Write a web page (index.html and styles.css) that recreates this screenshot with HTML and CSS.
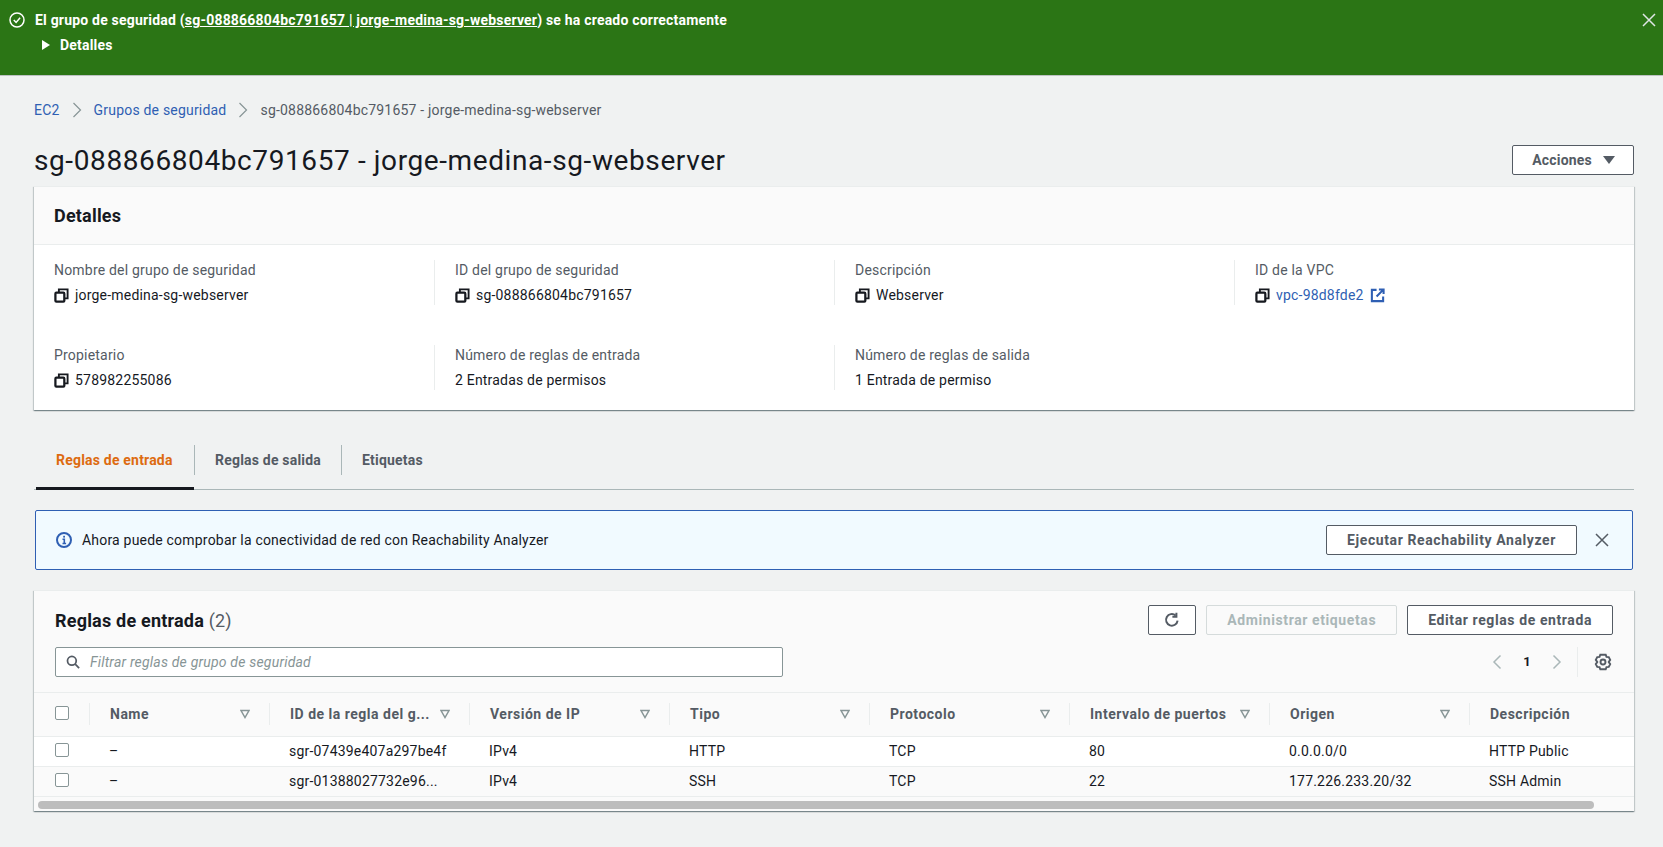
FILE: index.html
```html
<!DOCTYPE html>
<html lang="es">
<head>
  <meta charset="UTF-8">
  <title>Grupo de seguridad</title>
  <link rel="stylesheet" href="styles.css">
</head>
<body>

  <svg class="defs" width="0" height="0">
    <symbol id="copy" viewBox="0 0 16 16">
      <path d="M5.2 5V1.5h9.3V11H11" fill="none" stroke="currentColor" stroke-width="2"/>
      <rect x="1.5" y="5" width="9.5" height="9.5" rx="1" fill="none" stroke="currentColor" stroke-width="2.4"/>
    </symbol>
    <symbol id="sort" viewBox="0 0 10 10">
      <path d="M1 1.5h8L5 8.5z" fill="none" stroke="currentColor" stroke-width="1.5"/>
    </symbol>
    <symbol id="close" viewBox="0 0 16 16">
      <path d="M2 2l12 12M14 2L2 14" fill="none" stroke="currentColor" stroke-width="1.5"/>
    </symbol>
    <symbol id="crumb" viewBox="0 0 10 16">
      <path d="M1.5 1l7 7-7 7" fill="none" stroke="currentColor" stroke-width="1.2"/>
    </symbol>
  </svg>

  <div class="flash-success">
    <div class="flash-body">
      <svg class="flash-icon" viewBox="0 0 16 16"><circle cx="8" cy="8" r="7" fill="none" stroke="currentColor" stroke-width="1.5"/><path d="M4.8 8l2.3 2.4 4-4.6" fill="none" stroke="currentColor" stroke-width="1.5"/></svg>
      <div>
        <div class="flash-title">El grupo de seguridad (<a href="#">sg-088866804bc791657 | jorge-medina-sg-webserver</a>) se ha creado correctamente</div>
        <div class="flash-details"><span class="caret-right"></span>Detalles</div>
      </div>
    </div>
    <svg class="flash-close"><use href="#close"/></svg>
  </div>

  <main class="content">
    <nav class="breadcrumbs">
      <a href="#">EC2</a>
      <svg class="crumb-sep"><use href="#crumb"/></svg>
      <a href="#">Grupos de seguridad</a>
      <svg class="crumb-sep"><use href="#crumb"/></svg>
      <span>sg-088866804bc791657 - jorge-medina-sg-webserver</span>
    </nav>

    <div class="page-header">
      <h1>sg-088866804bc791657 - jorge-medina-sg-webserver</h1>
      <button class="btn btn-actions">Acciones <span class="caret-down"></span></button>
    </div>

    <section class="card details">
      <h2 class="card-title">Detalles</h2>
      <div class="details-grid">
        <div class="field">
          <div class="field-label">Nombre del grupo de seguridad</div>
          <div class="field-value"><svg class="copy"><use href="#copy"/></svg>jorge-medina-sg-webserver</div>
        </div>
        <div class="field">
          <div class="field-label">ID del grupo de seguridad</div>
          <div class="field-value"><svg class="copy"><use href="#copy"/></svg>sg-088866804bc791657</div>
        </div>
        <div class="field">
          <div class="field-label">Descripción</div>
          <div class="field-value"><svg class="copy"><use href="#copy"/></svg>Webserver</div>
        </div>
        <div class="field">
          <div class="field-label">ID de la VPC</div>
          <div class="field-value">
            <svg class="copy"><use href="#copy"/></svg><a href="#">vpc-98d8fde2</a>
            <svg class="external" viewBox="0 0 16 16"><path d="M7 2H2v12h12V9" fill="none" stroke="currentColor" stroke-width="2.2"/><path d="M9.5 1.5h5v5M14 2L7 9" fill="none" stroke="currentColor" stroke-width="2.2"/></svg>
          </div>
        </div>
        <div class="field">
          <div class="field-label">Propietario</div>
          <div class="field-value"><svg class="copy"><use href="#copy"/></svg>578982255086</div>
        </div>
        <div class="field">
          <div class="field-label">Número de reglas de entrada</div>
          <div class="field-value">2 Entradas de permisos</div>
        </div>
        <div class="field">
          <div class="field-label">Número de reglas de salida</div>
          <div class="field-value">1 Entrada de permiso</div>
        </div>
      </div>
    </section>

    <div class="tabs">
      <div class="tab active">Reglas de entrada</div>
      <div class="tab">Reglas de salida</div>
      <div class="tab">Etiquetas</div>
    </div>

    <div class="flash-info">
      <svg class="info-icon" viewBox="0 0 16 16"><circle cx="8" cy="8" r="7" fill="none" stroke="currentColor" stroke-width="2"/><path d="M6.5 7.2H8.3V11.5M6.5 11.5h3.6" fill="none" stroke="currentColor" stroke-width="1.6"/><rect x="7.2" y="3.8" width="1.8" height="1.8" fill="currentColor"/></svg>
      <span class="flash-info-text">Ahora puede comprobar la conectividad de red con Reachability Analyzer</span>
      <button class="btn btn-wide">Ejecutar Reachability Analyzer</button>
      <svg class="info-close"><use href="#close"/></svg>
    </div>

    <section class="card rules">
      <div class="rules-header">
        <div class="rules-left">
          <h2 class="rules-title">Reglas de entrada <span class="count">(2)</span></h2>
          <div class="search">
            <svg class="search-icon" viewBox="0 0 16 16"><circle cx="6.7" cy="6.7" r="5" fill="none" stroke="currentColor" stroke-width="2"/><path d="M10.5 10.5L15 15" fill="none" stroke="currentColor" stroke-width="2"/></svg>
            <span class="placeholder">Filtrar reglas de grupo de seguridad</span>
          </div>
        </div>
        <div class="rules-right">
          <div class="rules-buttons">
            <button class="btn btn-icon"><svg class="refresh" viewBox="0 0 16 16"><path d="M13.6 8.6A5.8 5.8 0 1 1 11.6 3.4" fill="none" stroke="currentColor" stroke-width="2"/><path d="M12.4 0.8v4h-4" fill="none" stroke="currentColor" stroke-width="2"/></svg></button>
            <button class="btn btn-disabled">Administrar etiquetas</button>
            <button class="btn">Editar reglas de entrada</button>
          </div>
          <div class="pager">
            <svg class="pager-arrow" viewBox="0 0 10 16"><path d="M8.5 1.5L2 8l6.5 6.5" fill="none" stroke="currentColor" stroke-width="1.5"/></svg>
            <span class="pager-num">1</span>
            <svg class="pager-arrow" viewBox="0 0 10 16"><path d="M1.5 1.5L8 8l-6.5 6.5" fill="none" stroke="currentColor" stroke-width="1.5"/></svg>
            <span class="pager-div"></span>
            <svg class="gear" viewBox="0 0 16 16"><path d="M5.6 1.5h4.8l.7 1.9 2 .3 1.3 2.4-1.3 1.9 1.3 1.9-1.3 2.4-2 .3-.7 1.9H5.6l-.7-1.9-2-.3-1.3-2.4 1.3-1.9-1.3-1.9 1.3-2.4 2-.3z" fill="none" stroke="currentColor" stroke-width="1.7"/><circle cx="8" cy="8" r="2.2" fill="none" stroke="currentColor" stroke-width="1.7"/></svg>
          </div>
        </div>
      </div>

      <div class="table-wrap">
        <table class="rules-table">
          <colgroup>
            <col class="col-check">
            <col class="col-name">
            <col class="col-data" span="7">
          </colgroup>
          <thead>
            <tr>
              <th class="cell-check"><span class="checkbox"></span></th>
              <th><div class="th-inner"><span>Name</span><svg class="sort"><use href="#sort"/></svg></div></th>
              <th><div class="th-inner"><span>ID de la regla del g...</span><svg class="sort"><use href="#sort"/></svg></div></th>
              <th><div class="th-inner"><span>Versión de IP</span><svg class="sort"><use href="#sort"/></svg></div></th>
              <th><div class="th-inner"><span>Tipo</span><svg class="sort"><use href="#sort"/></svg></div></th>
              <th><div class="th-inner"><span>Protocolo</span><svg class="sort"><use href="#sort"/></svg></div></th>
              <th><div class="th-inner"><span>Intervalo de puertos</span><svg class="sort"><use href="#sort"/></svg></div></th>
              <th><div class="th-inner"><span>Origen</span><svg class="sort"><use href="#sort"/></svg></div></th>
              <th><div class="th-inner"><span>Descripción</span></div></th>
            </tr>
          </thead>
          <tbody>
            <tr class="row-white">
              <td class="cell-check"><span class="checkbox"></span></td>
              <td>–</td>
              <td>sgr-07439e407a297be4f</td>
              <td>IPv4</td>
              <td>HTTP</td>
              <td>TCP</td>
              <td>80</td>
              <td>0.0.0.0/0</td>
              <td>HTTP Public</td>
            </tr>
            <tr>
              <td class="cell-check"><span class="checkbox"></span></td>
              <td>–</td>
              <td>sgr-01388027732e96...</td>
              <td>IPv4</td>
              <td>SSH</td>
              <td>TCP</td>
              <td>22</td>
              <td>177.226.233.20/32</td>
              <td>SSH Admin</td>
            </tr>
          </tbody>
        </table>
      </div>
      <div class="scroll-track"><div class="scroll-thumb"></div></div>
    </section>
  </main>

</body>
</html>
```

FILE: styles.css
```css
* {
  box-sizing: border-box;
}

body {
  margin: 0;
  height: 847px;
  overflow: hidden;
  background-color: #f0f2f2;
  color: #16191f;
  font-family: Roboto, sans-serif;
  font-size: 14px;
  line-height: 20px;
  letter-spacing: 0.2px;
}

a {
  color: #2f5fb3;
  text-decoration: none;
}

.defs {
  position: absolute;
}

/* top banner */
.flash-success {
  display: flex;
  justify-content: space-between;
  height: 76px;
  padding: 10px 6px 0 9px;
  background-color: #2b7515;
  border-bottom: 1px solid #bcc2c2;
  color: #fff;
  font-weight: 700;
}

.flash-body {
  display: flex;
  gap: 10px;
}

.flash-icon {
  width: 16px;
  height: 16px;
  margin-top: 2px;
}

.flash-title a {
  color: #fff;
  text-decoration: underline;
}

.flash-details {
  display: flex;
  align-items: center;
  margin-top: 5px;
  padding-left: 7px;
}

.caret-right {
  width: 0;
  height: 0;
  margin-right: 10px;
  border-left: 8px solid #fff;
  border-top: 5px solid transparent;
  border-bottom: 5px solid transparent;
}

.flash-close {
  width: 16px;
  height: 16px;
  margin-top: 2px;
  color: #dfe5e5;
}

/* main column */
.content {
  padding: 24px 29px 0 34px;
}

.breadcrumbs {
  display: flex;
  align-items: center;
  gap: 12px;
  height: 20px;
  color: #545b64;
}

.crumb-sep {
  width: 10px;
  height: 16px;
  color: #879596;
}

.page-header {
  display: flex;
  justify-content: space-between;
  align-items: center;
  height: 36px;
  margin-top: 22px;
  margin-bottom: 8px;
}

h1 {
  margin: 2px 0 0;
  font-size: 28px;
  font-weight: 400;
  line-height: 36px;
  letter-spacing: 0.6px;
}

.btn {
  height: 30px;
  padding: 0 20px;
  background-color: #fff;
  border: 1px solid #545b64;
  border-radius: 2px;
  color: #545b64;
  font-family: inherit;
  font-size: 14px;
  font-weight: 700;
  line-height: 20px;
  letter-spacing: 0.6px;
}

.btn-actions {
  display: flex;
  align-items: center;
  gap: 11px;
  padding: 0 18px 0 19px;
  letter-spacing: 0.2px;
}

.caret-down {
  width: 0;
  height: 0;
  border-top: 8px solid #545b64;
  border-left: 6px solid transparent;
  border-right: 6px solid transparent;
}

.card {
  background-color: #fff;
  border-top: 1px solid #eaeded;
  box-shadow: 0 1px 1px 0 rgba(0, 28, 36, 0.3), 1px 1px 1px 0 rgba(0, 28, 36, 0.15), -1px 1px 1px 0 rgba(0, 28, 36, 0.15);
}

.details {
  height: 224px;
}

.card-title {
  height: 58px;
  margin: 0;
  padding: 18px 20px;
  background-color: #fafafa;
  border-bottom: 1px solid #eaeded;
  font-size: 18px;
  font-weight: 700;
  line-height: 22px;
}

.details-grid {
  display: grid;
  grid-template-columns: repeat(4, 400px);
  row-gap: 40px;
  padding: 15px 0 0 0;
}

.field {
  height: 45px;
  padding-left: 20px;
  border-left: 1px solid #eaeded;
}

.field:nth-child(4n + 1) {
  border-left: none;
}

.field-label {
  color: #545b64;
}

.field-value {
  display: flex;
  align-items: center;
  margin-top: 5px;
}

.copy {
  width: 15px;
  height: 15px;
  margin-right: 6px;
}

.external {
  width: 15px;
  height: 15px;
  margin-left: 6px;
  color: #2f5fb3;
}

/* tabs */
.tabs {
  display: flex;
  align-items: flex-start;
  height: 80px;
  padding-top: 35px;
  border-bottom: 1px solid #aab7b8;
}

.tab {
  position: relative;
  height: 30px;
  padding: 5px 20px;
  border-left: 1px solid #aab7b8;
  color: #545b64;
  font-weight: 700;
  white-space: nowrap;
}

.tab:first-child {
  border-left: none;
  width: 158px;
  margin-left: 2px;
}

.tab.active {
  color: #dd6b10;
}

.tab.active::after {
  content: "";
  position: absolute;
  left: 0;
  right: 0;
  bottom: -15px;
  height: 3px;
  background-color: #16191f;
}

/* info banner */
.flash-info {
  display: flex;
  align-items: center;
  height: 60px;
  margin: 20px 1px 0;
  padding: 0 22px 0 20px;
  background-color: #f1faff;
  border: 1px solid #2f5fb3;
  border-radius: 2px;
}

.info-icon {
  width: 16px;
  height: 16px;
  margin-right: 10px;
  color: #2f5fb3;
}

.flash-info-text {
  flex: 1;
}

.btn-wide {
  margin-right: 17px;
}

.info-close {
  width: 16px;
  height: 16px;
  color: #545b64;
}

/* rules table */
.rules {
  margin-top: 20px;
  height: 221px;
  background-color: #fafafa;
  overflow: hidden;
}

.rules-header {
  display: flex;
  justify-content: space-between;
  height: 102px;
  padding: 14px 21px 0 21px;
  border-bottom: 1px solid #eaeded;
}

.rules-title {
  height: 30px;
  margin: 0;
  padding-top: 1px;
  font-size: 18px;
  font-weight: 700;
  line-height: 30px;
}

.count {
  color: #545b64;
  font-weight: 400;
}

.search {
  display: flex;
  align-items: center;
  width: 728px;
  height: 30px;
  margin-top: 12px;
  padding-left: 10px;
  background-color: #fff;
  border: 1px solid #879596;
  border-radius: 2px;
}

.search-icon {
  width: 14px;
  height: 14px;
  margin-right: 10px;
  color: #545b64;
}

.placeholder {
  color: #879596;
  font-style: italic;
}

.rules-right {
  display: flex;
  flex-direction: column;
  align-items: flex-end;
}

.rules-buttons {
  display: flex;
  gap: 10px;
}

.btn-icon {
  display: flex;
  align-items: center;
  justify-content: center;
  width: 48px;
  padding: 0;
}

.refresh {
  width: 16px;
  height: 16px;
}

.btn-disabled {
  background-color: #fafafa;
  border-color: #d5dbdb;
  color: #aab7b8;
}

.pager {
  display: flex;
  align-items: center;
  height: 30px;
  margin-top: 12px;
}

.pager-arrow {
  width: 10px;
  height: 16px;
  color: #aab7b8;
}

.pager-num {
  width: 50px;
  text-align: center;
  font-weight: 700;
  font-size: 13px;
}

.pager-div {
  width: 1px;
  height: 30px;
  margin: 0 16px 0 15px;
  background-color: #eaeded;
}

.gear {
  width: 18px;
  height: 18px;
  margin-right: 1px;
  color: #545b64;
}

.table-wrap {
  overflow: hidden;
}

.rules-table {
  width: 1635px;
  table-layout: fixed;
  border-collapse: collapse;
}

.col-check {
  width: 55px;
}

.col-name {
  width: 180px;
}

.col-data {
  width: 200px;
}

th {
  height: 43px;
  padding: 0;
  border-bottom: 1px solid #eaeded;
  color: #545b64;
  font-weight: 700;
  text-align: left;
  letter-spacing: 0.5px;
}

.th-inner {
  display: flex;
  justify-content: space-between;
  align-items: center;
  height: 22px;
  padding: 0 19px 0 20px;
  border-left: 1px solid #eaeded;
}

.sort {
  width: 10px;
  height: 10px;
  color: #879596;
}

td {
  height: 30px;
  padding: 0 20px;
  border-bottom: 1px solid #eaeded;
  white-space: nowrap;
}

.row-white td {
  background-color: #fff;
}

th.cell-check,
td.cell-check {
  padding: 0 0 2px 21px;
  vertical-align: middle;
}

.checkbox {
  display: block;
  width: 14px;
  height: 14px;
  background-color: #fff;
  border: 1px solid #879596;
  border-radius: 2px;
}

.scroll-track {
  height: 15px;
  padding: 4px 40px 3px 4px;
  background-color: #fafafa;
}

.scroll-thumb {
  height: 8px;
  background-color: #bdbdbd;
  border-radius: 4px;
}
```
